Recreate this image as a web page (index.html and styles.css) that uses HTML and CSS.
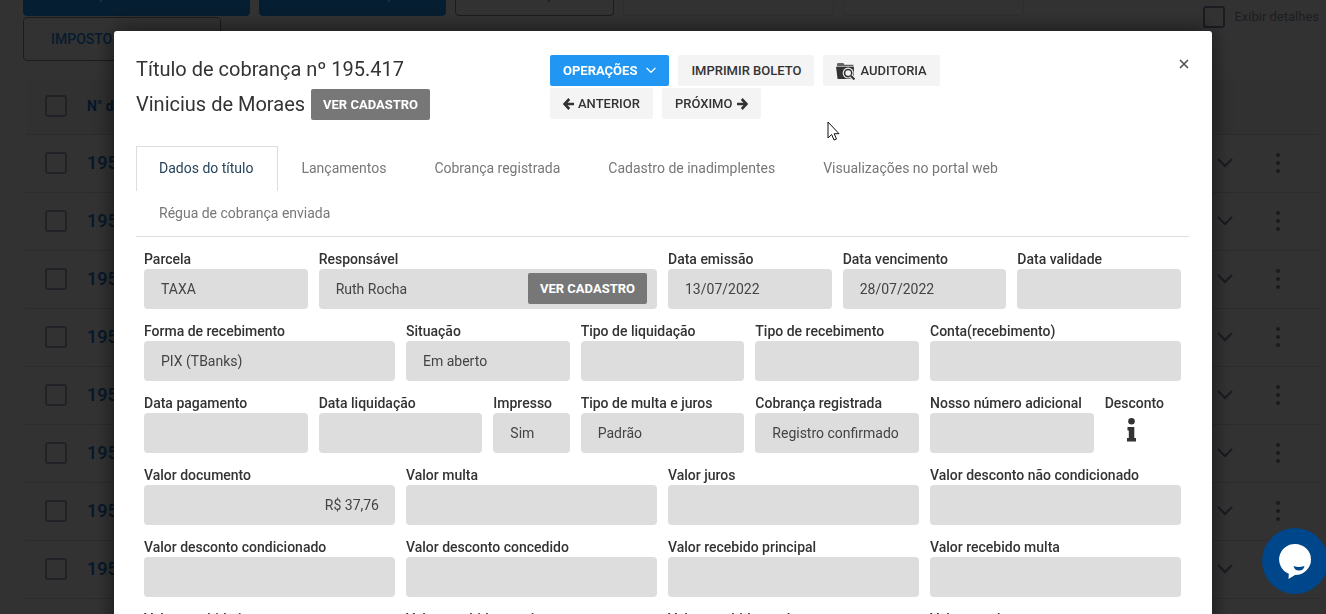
FILE: index.html
```html
<!DOCTYPE html>
<html lang="pt-BR">
<head>
<meta charset="utf-8">
<meta name="viewport" content="width=device-width, initial-scale=1">
<title>Título de cobrança</title>
<link rel="stylesheet" href="styles.css">
</head>
<body>
<svg class="sprite" aria-hidden="true">
  <symbol id="chev" viewBox="0 0 16 10"><path d="M1.5 1.5 8 8l6.500-6.500" fill="none" stroke="currentColor" stroke-width="2" stroke-linecap="round"/></symbol>
  <symbol id="dots" viewBox="0 0 4 20"><circle cx="2" cy="2" r="2"/><circle cx="2" cy="10" r="2"/><circle cx="2" cy="18" r="2"/></symbol>
  <symbol id="arrow" viewBox="0 0 12 12"><path d="M11 6H2M6.300 1 1.500 6l4.800 5" fill="none" stroke="currentColor" stroke-width="2.600"/></symbol>
</svg>

<main class="page">
  <div class="toolbar">
    <button class="tool primary w1">OPERAÇÕES COM TÍTULOS</button>
    <button class="tool primary w2">NOVA COBRANÇA</button>
    <button class="tool w3">IMPORTAÇÃO</button>
    <button class="tool off w4" disabled>BAIXAR</button>
    <button class="tool off w5" disabled>ENVIAR</button>
    <button class="tool w6">IMPOSTO DE RENDA</button>
    <label class="details"><input class="check" type="checkbox">Exibir detalhes</label>
  </div>
  <table class="list">
    <thead><tr><th class="c-check"><input class="check" type="checkbox" aria-label="Selecionar todos"></th><th>N° do título</th><th class="c-open"></th><th class="c-more"></th></tr></thead>
    <tbody id="rows"></tbody>
  </table>
</main>

<div class="overlay">
  <section class="modal" role="dialog" aria-labelledby="title">
    <header class="head">
      <div class="titles">
        <h1 id="title">Título de cobrança nº 195.417</h1>
        <div class="person">Vinicius de Moraes <button class="btn dark">VER CADASTRO</button></div>
      </div>
      <div class="actions">
        <div class="group">
          <button class="btn blue">OPERAÇÕES <svg class="i-chev"><use href="#chev"/></svg></button>
          <button class="btn light">IMPRIMIR BOLETO</button>
          <button class="btn light audit"><svg class="i-folder" viewBox="0 0 18 17"><path fill="currentColor" d="M1 2.500V1.800Q1 1 2 1h5l1 1.500h8.500V4H1z" opacity=".75"/><path fill="currentColor" d="M0 4.500h17V16H1.500z"/><circle cx="11.500" cy="10.500" r="5.200" fill="#f4f4f4"/><circle cx="11.500" cy="10.500" r="3.400" fill="none" stroke="currentColor" stroke-width="1.500"/><path d="m14 13 3.500 3.500" stroke="#f4f4f4" stroke-width="4"/><path d="m14 13 3.500 3.500" stroke="currentColor" stroke-width="2"/></svg>AUDITORIA</button>
        </div>
        <div class="group">
          <button class="btn light"><svg class="i-arrow"><use href="#arrow"/></svg>ANTERIOR</button>
          <button class="btn light">PRÓXIMO<svg class="i-arrow next"><use href="#arrow"/></svg></button>
        </div>
      </div>
      <button class="close" aria-label="Fechar"><svg viewBox="0 0 10 10"><path d="m1 1 8 8M9 1 1 9" stroke="currentColor" stroke-width="1.700"/></svg></button>
    </header>

    <nav class="tabs">
      <a class="tab active" href="#">Dados do título</a><a class="tab" href="#">Lançamentos</a><a class="tab" href="#">Cobrança registrada</a><a class="tab" href="#">Cadastro de inadimplentes</a><a class="tab" href="#">Visualizações no portal web</a><a class="tab" href="#">Régua de cobrança enviada</a>
    </nav>

    <form class="form">
      <label class="field s2">Parcela<input readonly value="TAXA"></label>
      <div class="field s4"><label for="resp">Responsável</label><div class="holder"><input id="resp" readonly value="Ruth Rocha"><button type="button" class="btn dark inside">VER CADASTRO</button></div></div>
      <label class="field s2">Data emissão<input readonly value="13/07/2022"></label>
      <label class="field s2">Data vencimento<input readonly value="28/07/2022"></label>
      <label class="field s2">Data validade<input readonly></label>

      <label class="field s3">Forma de recebimento<input readonly value="PIX (TBanks)"></label>
      <label class="field s2">Situação<input readonly value="Em aberto"></label>
      <label class="field s2">Tipo de liquidação<input readonly></label>
      <label class="field s2">Tipo de recebimento<input readonly></label>
      <label class="field s3">Conta(recebimento)<input readonly></label>

      <label class="field s2">Data pagamento<input readonly></label>
      <label class="field s2">Data liquidação<input readonly></label>
      <label class="field s1">Impresso<input readonly value="Sim"></label>
      <label class="field s2">Tipo de multa e juros<input readonly value="Padrão"></label>
      <label class="field s2">Cobrança registrada<input readonly value="Registro confirmado"></label>
      <label class="field s2">Nosso número adicional<input readonly></label>
      <div class="field s1">Desconto<button type="button" class="info" aria-label="Informações do desconto"><svg viewBox="0 0 9 24"><circle cx="4.500" cy="3.300" r="3.300"/><path d="M.5 9h6.800v11H9v3.500H0V20h1.800v-7.500H.5z"/></svg></button></div>

      <label class="field s3">Valor documento<input class="money" readonly value="R$ 37,76"></label>
      <label class="field s3">Valor multa<input readonly></label>
      <label class="field s3">Valor juros<input readonly></label>
      <label class="field s3">Valor desconto não condicionado<input readonly></label>

      <label class="field s3">Valor desconto condicionado<input readonly></label>
      <label class="field s3">Valor desconto concedido<input readonly></label>
      <label class="field s3">Valor recebido principal<input readonly></label>
      <label class="field s3">Valor recebido multa<input readonly></label>

      <label class="field s3">Valor recebido juros<input readonly></label>
      <label class="field s3">Valor recebido a maior<input readonly></label>
      <label class="field s3">Valor recebido total<input readonly></label>
      <label class="field s3">Valor em aberto<input readonly></label>
    </form>
  </section>
</div>

<button class="chat" aria-label="Abrir chat"><svg viewBox="0 0 34 36"><path fill="#fff" d="M17 1a16 15.500 0 0 1 0 31l-6.500 4 .3-5.200A15.800 15.500 0 0 1 17 1z"/><path fill="#00468a" d="M15.500 23q5 2 11 0-1 4.500-5.500 4.500T15.500 23z"/></svg></button>
<svg class="cursor" viewBox="0 0 13 20"><path d="M1 1v16l3.700-3.500L7 19l2.500-1-2.300-5.300H12z" fill="#fff" stroke="#111"/></svg>
<script src="script.js"></script>
</body>
</html>
```
FILE: styles.css
```css
* { box-sizing: border-box; }
body { margin: 0; height: 100vh; overflow: hidden; background: #fbfbfb; color: #333; font: 14px/20px Roboto, sans-serif; }
button, input { font: inherit; color: inherit; }
button { cursor: pointer; }
.sprite { position: absolute; width: 0; height: 0; }

.page { height: 100vh; overflow: hidden; padding: 0 7px 0 23px; }
.toolbar { display: flex; flex-wrap: wrap; gap: 1px 9px; margin-top: -28px; }
.tool { height: 44px; padding: 0 27px; border: 1px solid #8a8a9c; border-radius: 4px; background: transparent; color: #1e88e5; font-weight: 500; text-align: left; white-space: nowrap; overflow: hidden; }
.tool.primary { background: #2196f3; border-color: #2196f3; color: #fff; }
.tool.off { border-color: #e4e4e4; color: #ccc; }
.w1 { width: 227px; } .w2 { width: 187px; } .w3 { width: 159px; } .w4 { width: 211px; } .w5 { width: 181px; margin-right: 200px; } .w6 { width: 198px; }
.details { display: flex; align-items: center; gap: 9px; height: 22px; margin: -11px 0 0 auto; color: #8f8fa6; font-size: 13px; }
.check { appearance: none; display: block; width: 22px; height: 22px; margin: 0; border: 2px solid #a8a4c4; border-radius: 3px; }
.details .check { border-color: #8a86a8; }
.list { width: calc(100% - 3px); margin: 18px 0 0 3px; border-collapse: collapse; table-layout: fixed; }
.list tr { height: 58px; border-bottom: 1px solid #dcdce4; }
.list thead tr { height: 55px; background: #f3f3f3; }
.list th, .list td { padding: 0; text-align: left; color: #1976d2; font-weight: 700; }
.list td { font-size: 18px; font-weight: 500; }
.list .c-check { width: 61px; padding-left: 19px; }
.list .c-open { width: 59px; }
.list .c-more { width: 43px; }
.row-btn { display: block; padding: 0; border: 0; background: none; color: #8480a4; }
.row-btn svg { display: block; width: 16px; height: 10px; }
.row-btn .i-dots { width: 4px; height: 20px; fill: #8480a4; }

.overlay { position: fixed; inset: 0; overflow: hidden; padding: 31px 114px 0; background: rgba(0, 0, 0, .8); }
.modal { padding: 24px 23px 22px 22px; border-radius: 3px; background: #fff; box-shadow: 0 0 24px rgba(0, 0, 0, .6); }
.head { display: flex; align-items: flex-start; height: 91px; }
.titles { flex: 0 0 414px; font-size: 20px; line-height: 28px; }
h1 { margin: 0 0 6px; font: inherit; }
.person { display: flex; align-items: center; gap: 6px; line-height: 31px; }
.actions { flex: 1; display: flex; flex-direction: column; gap: 2px; }
.group { display: flex; gap: 9px; }
.btn { display: inline-flex; align-items: center; height: 31px; padding: 0 13px; border: 0; border-radius: 2px; font-size: 13px; line-height: 20px; font-weight: 500; white-space: nowrap; }
.dark { padding: 0 12px; background: #777; color: #fff; font-weight: 700; }
.blue { background: #2196f3; color: #fff; font-weight: 700; }
.light { background: #f4f4f4; color: #333; }
.i-chev { width: 10px; height: 7px; margin-left: 9px; }
.i-arrow { width: 12px; height: 12px; margin-right: 3px; }
.i-arrow.next { margin: 0 0 0 4px; transform: scaleX(-1); }
.i-folder { width: 19px; height: 18px; margin-right: 5px; }
.close { width: 10px; height: 10px; margin-top: 4px; padding: 0; border: 0; background: none; color: #555; }
.close svg { display: block; }

.tabs { display: flex; flex-wrap: wrap; border-bottom: 1px solid #ddd; }
.tab { height: 45px; padding: 0 24px 0 22px; border: 1px solid transparent; border-width: 1px 1px 0; color: #777; line-height: 43px; text-decoration: none; }
.tab.active { border-color: #ddd; color: #25445c; }

.form { display: grid; grid-template-columns: repeat(12, minmax(0, 1fr)); gap: 12px 11px; padding: 12px 8px 0; }
.field { display: block; font-weight: 500; white-space: nowrap; }
.field label { display: block; }
.field input { display: block; width: 100%; height: 40px; padding: 0 17px; border: 0; border-radius: 4px; background: #ddd; color: #444; font-weight: 400; outline: 0; }
.field .money { padding-right: 16px; text-align: right; }
.s1 { grid-column: span 1; } .s2 { grid-column: span 2; } .s3 { grid-column: span 3; } .s4 { grid-column: span 4; }
.holder { position: relative; }
.inside { position: absolute; right: 10px; top: 4px; }
.info { display: block; margin: 5px 0 0 22px; padding: 0; border: 0; background: none; }
.info svg { display: block; width: 9px; height: 24px; fill: #333; }

.chat { position: fixed; right: -2px; bottom: 20px; width: 66px; height: 66px; padding: 0; border: 0; border-radius: 50%; background: #00468a; }
.chat svg { display: block; width: 34px; height: 36px; margin: 0 auto; }
.cursor { position: fixed; left: 827px; top: 121px; width: 13px; height: 20px; }
```
FILE: script.js
```js
const row = n => `<tr><td class="c-check"><input class="check" type="checkbox" aria-label="Selecionar ${n}"></td><td>${n}</td><td><button class="row-btn" aria-label="Expandir"><svg><use href="#chev"/></svg></button></td><td><button class="row-btn" aria-label="Mais opções"><svg class="i-dots"><use href="#dots"/></svg></button></td></tr>`;
document.getElementById('rows').innerHTML = Array.from({ length: 9 }, (_, i) => row('195.' + (417 - i))).join('');
```
